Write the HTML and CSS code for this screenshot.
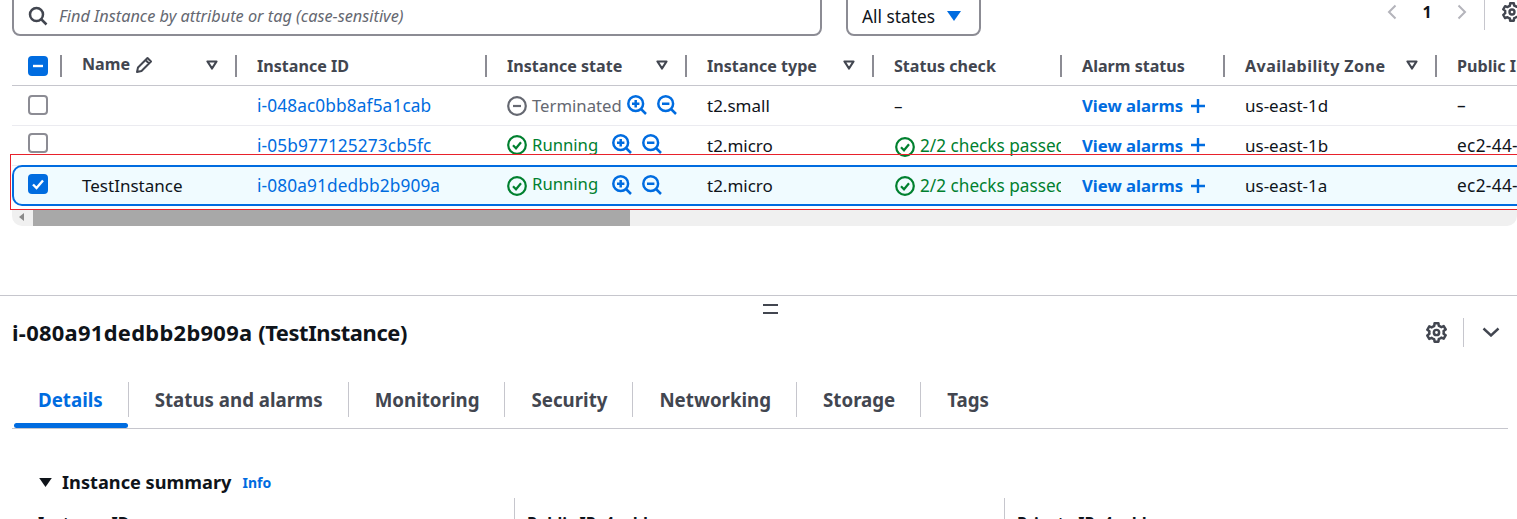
FILE: index.html
```html
<!DOCTYPE html>
<html lang="en">
<head>
  <meta charset="UTF-8" />
  <title>Instances</title>
  <link rel="stylesheet" href="styles.css">
</head>
<body>
  <svg class="sprites" width="0" height="0">
    <symbol id="i-ok" viewBox="0 0 20 20"><circle cx="10" cy="10" r="8.800" fill="none" stroke="currentColor" stroke-width="2.200"/><path d="M6 10.300l3 3 5-6" fill="none" stroke="currentColor" stroke-width="2.200"/></symbol>
    <symbol id="i-stop" viewBox="0 0 20 20"><circle cx="10" cy="10" r="8.800" fill="none" stroke="currentColor" stroke-width="2.200"/><path d="M6 10h8" fill="none" stroke="currentColor" stroke-width="2.200"/></symbol>
    <symbol id="i-zoomin" viewBox="0 0 20 20"><circle cx="8.700" cy="8.700" r="7.400" fill="none" stroke="currentColor" stroke-width="2.500"/><path d="M14 14l5 5M5 8.700h7.400M8.700 5v7.400" fill="none" stroke="currentColor" stroke-width="2.500"/></symbol>
    <symbol id="i-zoomout" viewBox="0 0 20 20"><circle cx="8.700" cy="8.700" r="7.400" fill="none" stroke="currentColor" stroke-width="2.500"/><path d="M14 14l5 5M5 8.700h7.400" fill="none" stroke="currentColor" stroke-width="2.500"/></symbol>
    <symbol id="i-caret" viewBox="0 0 12 10"><path d="M1.500 1.500h9L6 8.500z" fill="none" stroke="currentColor" stroke-width="2.200" stroke-linejoin="round"/></symbol>
    <symbol id="i-plus" viewBox="0 0 16 16"><path d="M8 1v14M1 8h14" fill="none" stroke="currentColor" stroke-width="2.400"/></symbol>
    <symbol id="i-gear" viewBox="0 0 16 16"><path d="M13.500 8c0-.38-.05-.75-.13-1.100l1.630-1.190-1.500-2.600-1.850.82c-.55-.51-1.210-.9-1.950-1.120L9.500 1h-3l-.2 2.010c-.74.22-1.400.61-1.950 1.120L2.500 3.310 1 5.910 2.630 7.100c-.08.35-.13.720-.13.900 0 .18.05.55.13.900L1 10.290l1.500 2.600 1.850-.82c.55.51 1.210.9 1.950 1.120L6.500 15h3l.2-2.010c.74-.22 1.400-.61 1.950-1.120l1.850.82 1.500-2.600-1.630-1.190c.08-.35.13-.72.13-1.100Z" fill="none" stroke="currentColor" stroke-width="1.900" stroke-linejoin="round"/><circle cx="8" cy="8" r="2" fill="none" stroke="currentColor" stroke-width="1.900"/></symbol>
  </svg>

  <div class="toolbar">
    <div class="search">
      <svg class="search-icon" viewBox="0 0 20 20"><circle cx="8.500" cy="8.500" r="6.500" fill="none" stroke="currentColor" stroke-width="2.500"/><path d="M13 13l5.500 5.500" fill="none" stroke="currentColor" stroke-width="2.500"/></svg>
      <span>Find Instance by attribute or tag (case-sensitive)</span>
    </div>
    <div class="states">
      <span>All states</span>
      <svg class="states-caret" viewBox="0 0 14 10"><path d="M0 0h14L7 10z" fill="currentColor"/></svg>
    </div>
    <div class="pager">
      <svg class="chev" viewBox="0 0 10 16"><path d="M8.500 1.500L2 8l6.500 6.500" fill="none" stroke="currentColor" stroke-width="2"/></svg>
      <span class="page-num">1</span>
      <svg class="chev" viewBox="0 0 10 16"><path d="M1.500 1.500L8 8l-6.500 6.500" fill="none" stroke="currentColor" stroke-width="2"/></svg>
      <span class="pager-sep"></span>
      <svg class="pager-gear"><use href="#i-gear"/></svg>
    </div>
  </div>

  <div class="table">
    <div class="row head">
      <div class="cell"><span class="check mixed"><svg viewBox="0 0 20 20"><path d="M5 10h10" stroke="#fff" stroke-width="2.400"/></svg></span><i class="sep"></i></div>
      <div class="cell name-head"><span class="raised">Name</span><svg class="pencil" viewBox="0 0 18 18"><path d="M2 16l1-4.500L12.500 2l3.500 3.500-9.500 9.500zM10.500 4l3.500 3.500" fill="none" stroke="currentColor" stroke-width="2" stroke-linejoin="round"/></svg><svg class="caret"><use href="#i-caret"/></svg><i class="sep"></i></div>
      <div class="cell"><span>Instance ID</span><i class="sep"></i></div>
      <div class="cell"><span>Instance state</span><svg class="caret"><use href="#i-caret"/></svg><i class="sep"></i></div>
      <div class="cell"><span>Instance type</span><svg class="caret"><use href="#i-caret"/></svg><i class="sep"></i></div>
      <div class="cell"><span>Status check</span><i class="sep"></i></div>
      <div class="cell"><span>Alarm status</span><i class="sep"></i></div>
      <div class="cell"><span class="az-head">Availability Zone</span><svg class="caret"><use href="#i-caret"/></svg><i class="sep"></i></div>
      <div class="cell"><span>Public IPv4 DNS</span></div>
    </div>

    <div class="row first">
      <div class="cell"><span class="check"></span></div>
      <div class="cell"></div>
      <div class="cell"><a class="link">i-048ac0bb8af5a1cab</a></div>
      <div class="cell state off">
        <svg class="st-icon"><use href="#i-stop"/></svg><span class="st-text">Terminated</span>
        <span class="zooms tight"><svg><use href="#i-zoomin"/></svg><svg><use href="#i-zoomout"/></svg></span>
      </div>
      <div class="cell">t2.small</div>
      <div class="cell">–</div>
      <div class="cell alarm">View alarms <svg class="plus"><use href="#i-plus"/></svg></div>
      <div class="cell">us-east-1d</div>
      <div class="cell dns">–</div>
    </div>

    <div class="row second">
      <div class="cell"><span class="check"></span></div>
      <div class="cell"></div>
      <div class="cell"><a class="link">i-05b977125273cb5fc</a></div>
      <div class="cell state on">
        <svg class="st-icon"><use href="#i-ok"/></svg><span class="st-text">Running</span>
        <span class="zooms"><svg><use href="#i-zoomin"/></svg><svg><use href="#i-zoomout"/></svg></span>
      </div>
      <div class="cell">t2.micro</div>
      <div class="cell checks"><svg class="st-icon"><use href="#i-ok"/></svg><span class="clip">2/2 checks passed</span></div>
      <div class="cell alarm">View alarms <svg class="plus"><use href="#i-plus"/></svg></div>
      <div class="cell">us-east-1b</div>
      <div class="cell dns">ec2-44-201-17-92</div>
    </div>

    <div class="row selected">
      <div class="cell"><span class="check mixed"><svg viewBox="0 0 20 20"><path d="M5 10.500l3.500 3.500L15 6.500" fill="none" stroke="#fff" stroke-width="2.400"/></svg></span></div>
      <div class="cell">TestInstance</div>
      <div class="cell"><a class="link">i-080a91dedbb2b909a</a></div>
      <div class="cell state on">
        <svg class="st-icon"><use href="#i-ok"/></svg><span class="st-text">Running</span>
        <span class="zooms"><svg><use href="#i-zoomin"/></svg><svg><use href="#i-zoomout"/></svg></span>
      </div>
      <div class="cell">t2.micro</div>
      <div class="cell checks"><svg class="st-icon"><use href="#i-ok"/></svg><span class="clip">2/2 checks passed</span></div>
      <div class="cell alarm">View alarms <svg class="plus"><use href="#i-plus"/></svg></div>
      <div class="cell">us-east-1a</div>
      <div class="cell dns">ec2-44-210-8-151</div>
    </div>

    <div class="hscroll"><span class="hscroll-arrow"></span><span class="hscroll-thumb"></span></div>
  </div>

  <div class="red-mark"></div>

  <div class="split">
    <div class="split-handle"></div>
    <div class="detail-head">
      <h2><span class="title-id">i-080a91dedbb2b909a</span> <span class="title-name">(TestInstance)</span></h2>
      <div class="detail-actions">
        <svg class="detail-gear"><use href="#i-gear"/></svg>
        <span class="detail-sep"></span>
        <svg class="detail-chev" viewBox="0 0 18 10"><path d="M1.500 1.500L9 8.500l7.500-7" fill="none" stroke="currentColor" stroke-width="2.400"/></svg>
      </div>
    </div>

    <div class="tabs">
      <div class="tab active">Details</div>
      <div class="tab">Status and alarms</div>
      <div class="tab">Monitoring</div>
      <div class="tab">Security</div>
      <div class="tab">Networking</div>
      <div class="tab">Storage</div>
      <div class="tab">Tags</div>
    </div>

    <div class="summary">
      <svg class="summary-caret" viewBox="0 0 14 10"><path d="M0 0h14L7 10z" fill="currentColor"/></svg>
      <span class="summary-title">Instance summary</span>
      <a class="info">Info</a>
    </div>

    <div class="fields">
      <div class="field">Instance ID</div>
      <div class="field">Public IPv4 address</div>
      <div class="field">Private IPv4 addresses</div>
    </div>
  </div>
</body>
</html>
```

FILE: styles.css
```css
html, body {
  margin: 0;
  height: 519px;
  overflow: hidden;
}
body {
  position: relative;
  background: #fff;
  color: #0f141a;
  font-family: "Noto Sans", sans-serif;
  font-size: 16px;
}
.sprites { position: absolute; }
svg { display: block; flex: none; }

/* top toolbar, cut off by the top of the window */
.toolbar {
  display: flex;
  align-items: flex-end;
  height: 36px;
  padding-left: 12px;
  overflow: hidden;
}
.search {
  display: flex;
  align-items: center;
  box-sizing: border-box;
  width: 810px;
  height: 52px;
  padding: 12px 0 0 14px;
  border: 2px solid #8c8c94;
  border-radius: 8px;
  color: #656871;
  font-size: 16.300px;
  font-style: italic;
}
.search-icon { width: 20px; height: 20px; margin-right: 11px; color: #424650; }
.states {
  display: flex;
  align-items: center;
  box-sizing: border-box;
  width: 135px;
  height: 52px;
  margin-left: 24px;
  padding: 12px 0 0 14px;
  border: 2px solid #8c8c94;
  border-radius: 8px;
  font-size: 17.300px;
}
.states-caret { width: 14px; height: 10px; margin-left: 12px; color: #006ce0; }
.pager {
  display: flex;
  align-items: center;
  align-self: flex-start;
  height: 24px;
  margin-left: auto;
  color: #b4b4bb;
}
.chev { width: 10px; height: 16px; }
.page-num { width: 60px; text-align: center; font-weight: 700; color: #0f141a; }
.pager-sep { width: 1px; height: 30px; margin: 0 17px; background: #c6c6cd; align-self: flex-start; }
.pager-gear { width: 20px; height: 20px; margin-right: -5px; color: #424650; }

/* instance table */
.table {
  margin: 17px 0 0 12px;
  width: 1505px;
  overflow: hidden;
}
.row {
  display: grid;
  grid-template-columns: 49px 175px 250px 200px 187px 188px 163px 212px 240px;
  width: 1664px;
  height: 39px;
  border-bottom: 1px solid #ebebf0;
  font-size: 17px;
}
.cell {
  position: relative;
  display: flex;
  align-items: center;
  min-width: 0;
  padding-left: 21px;
  white-space: nowrap;
}
.cell:first-child { padding-left: 16px; }
.row.head {
  height: 32px;
  border-bottom: 1px solid #c6c6cd;
  color: #424650;
  font-size: 16.100px;
  font-weight: 700;
}
.row.head .cell { padding-bottom: 6px; }
.sep {
  position: absolute;
  right: -1px;
  top: 2px;
  width: 2px;
  height: 22px;
  background: #8c8c94;
}
.raised { position: relative; top: -2px; }
.caret { position: absolute; right: 18px; top: 7px; width: 12px; height: 10px; color: #424650; }
.pencil { width: 18px; height: 18px; margin: -2px 0 0 5px; color: #424650; }
.az-head { letter-spacing: .4px; }

.check {
  display: block;
  box-sizing: border-box;
  width: 20px;
  height: 20px;
  border: 2px solid #8c8c94;
  border-radius: 4px;
}
.check.mixed { border: none; background: #006ce0; }
.row.first .check { margin-bottom: 2px; }
.row.second .check { margin-bottom: 4px; }
.row.selected .check { margin-bottom: 3px; }
.row.second .cell { padding-bottom: 1px; }
.row.second .checks .st-icon { margin-top: 3px; }
.link { color: #006ce0; font-size: 17.300px; letter-spacing: .1px; }
.state { font-size: 16.700px; }
.checks { font-size: 17.200px; padding-left: 22px; }
.state.on, .checks { color: #00802f; }
.state.off { color: #656871; }
.st-icon { width: 20px; height: 20px; margin-right: 5px; }
.st-text { position: relative; top: -1px; }
.state.off .st-text { top: 0; }
.selected .state .st-text { top: -2px; }
.zooms { display: flex; gap: 10px; margin-left: 14px; color: #006ce0; }
.zooms.tight { margin-left: 5px; }
.zooms svg { width: 20px; height: 20px; position: relative; top: -1px; }
.clip { width: 141px; overflow: hidden; }
.alarm { color: #006ce0; font-size: 16.700px; font-weight: 700; }
.plus { width: 16px; height: 16px; margin-left: 7px; }
.dns { font-size: 17.300px; letter-spacing: .3px; }

.row.selected {
  grid-template-columns: 47px 175px 250px 200px 187px 188px 163px 212px 240px;
  box-sizing: content-box;
  height: 37px;
  border: 2px solid #006ce0;
  border-radius: 10px;
  background: #f0fbff;
  width: 1660px;
  margin-top: -1px;
}
.row.selected .cell:first-child { padding-left: 14px; }

.hscroll {
  position: relative;
  height: 17px;
  margin-top: 3px;
  background: #f0f0f0;
  border-radius: 0 0 10px 10px;
}
.hscroll-arrow {
  position: absolute;
  left: 7px;
  top: 4px;
  border-style: solid;
  border-width: 4px 5px 4px 0;
  border-color: transparent #8a8a8a transparent transparent;
}
.hscroll-thumb {
  position: absolute;
  left: 21px;
  top: 0;
  width: 597px;
  height: 100%;
  background: #a8a8a8;
}

/* red rectangle drawn on top of the selected row */
.red-mark {
  position: absolute;
  left: 10px;
  top: 154px;
  width: 1510px;
  height: 54px;
  border: 1px solid #e8212b;
}

/* details pane */
.split {
  margin-top: 69px;
  border-top: 1px solid #c6c6cd;
}
.split-handle {
  width: 15px;
  height: 6px;
  margin: 8px 0 0 763px;
  border-top: 2px solid #424650;
  border-bottom: 2px solid #424650;
}
.detail-head {
  display: flex;
  align-items: center;
  justify-content: space-between;
  height: 30px;
  margin-top: 3px;
  padding: 0 17px 0 12px;
}
.detail-head h2 { margin: 0; font-size: 21.900px; font-weight: 700; }
.title-id { letter-spacing: .3px; }
.title-name { letter-spacing: -.4px; }
.detail-actions { display: flex; align-items: center; color: #424650; }
.detail-gear { width: 21px; height: 21px; }
.detail-sep { width: 1px; height: 29px; margin: 0 18px 0 16px; background: #c6c6cd; }
.detail-chev { width: 18px; height: 10px; }

.tabs {
  display: flex;
  align-items: center;
  height: 46px;
  margin: 35px 9px 0 12px;
  border-bottom: 1px solid #c6c6cd;
  color: #424650;
  font-size: 18.700px;
  font-weight: 700;
}
.tab {
  position: relative;
  padding: 0 25px 0 26px;
  line-height: 35px;
  margin-bottom: 12px;
  border-right: 1px solid #c6c6cd;
}
.tab:last-child { border-right: none; }
.tab.active { color: #006ce0; }
.tab.active::after {
  content: "";
  position: absolute;
  left: 2px;
  right: 0;
  bottom: -11px;
  height: 5px;
  border-radius: 3px;
  background: #006ce0;
}

.summary {
  display: flex;
  align-items: center;
  height: 30px;
  margin-top: 38px;
  padding-left: 39px;
}
.summary-caret { width: 13px; height: 9px; margin-right: 10px; }
.summary-title { font-size: 18.200px; font-weight: 700; }
.info { margin-left: 11px; color: #006ce0; font-size: 14px; font-weight: 700; }

.fields {
  display: flex;
  margin-top: 1px;
}
.field {
  box-sizing: border-box;
  height: 40px;
  padding: 14px 0 0 12px;
  font-weight: 700;
  border-left: 1px solid #c6c6cd;
}
.field:nth-child(1) { width: 514px; padding-left: 38px; border-left: none; }
.field:nth-child(2) { width: 490px; }
.field:nth-child(3) { width: 400px; }
```
